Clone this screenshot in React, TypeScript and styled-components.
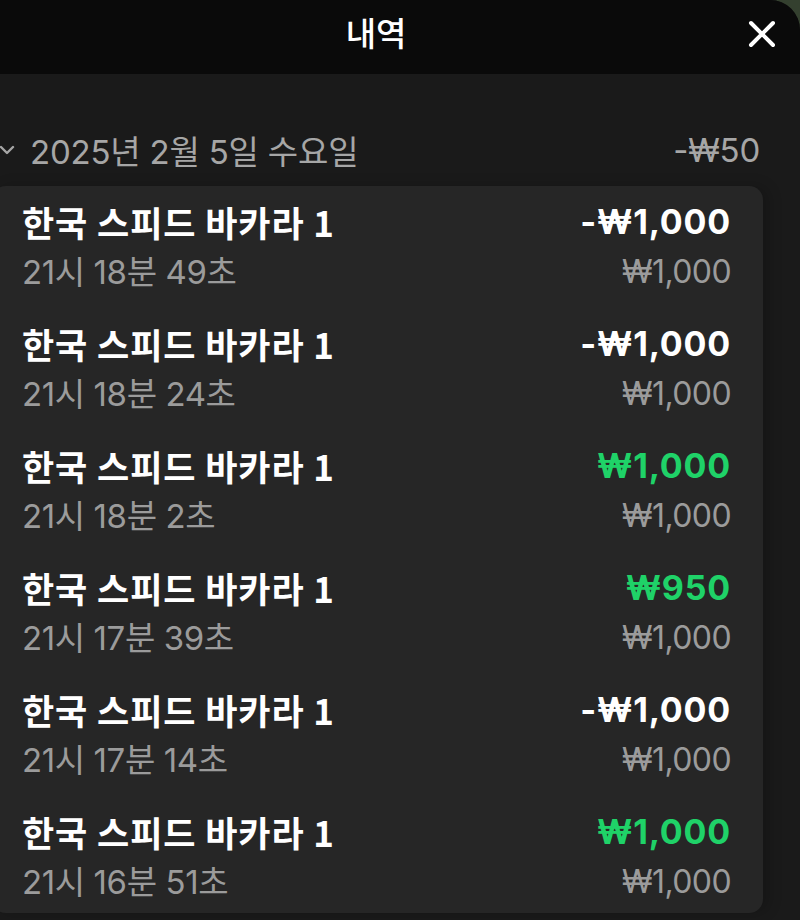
import React from 'react';
import styled, { createGlobalStyle } from 'styled-components';

const GlobalStyle = createGlobalStyle`
	html, body {
		margin: 0;
		padding: 0;
		background: #2f3a30;
	}
	body {
		font-family: Inter, "Noto Sans CJK KR", sans-serif;
	}
`;

const Screen = styled.div`
	width: 800px;
	height: 920px;
	overflow: hidden;
	background: #34402f;
`;

const Sheet = styled.div`
	height: 100%;
	background: #1a1a1a;
	border-top-right-radius: 30px;
	overflow: hidden;
	display: flex;
	flex-direction: column;
`;

const Header = styled.header`
	height: 74px;
	flex: none;
	background: #0a0a0a;
	display: flex;
	align-items: center;
	justify-content: center;
	position: relative;
`;

const Title = styled.h1`
	margin: 0;
	font-family: "Noto Sans CJK KR", sans-serif;
	font-size: 33px;
	font-weight: 500;
	color: #fff;
	line-height: 1;
	transform: translate(-24px, -5px);
`;

const CloseButton = styled.button`
	position: absolute;
	right: 22px;
	top: 18px;
	width: 32px;
	height: 32px;
	padding: 0;
	border: 0;
	background: none;
	display: flex;
	align-items: center;
	justify-content: center;
`;

const Body = styled.div`
	padding-top: 54px;
	display: flex;
	flex-direction: column;
	gap: 14px;
`;

const DateRow = styled.div`
	height: 44px;
	display: flex;
	align-items: center;
	padding-right: 40px;
	color: #a6a6a6;
	font-size: 33px;
	letter-spacing: -0.2px;
`;

const DateLabel = styled.div`
	display: flex;
	align-items: center;
	gap: 14px;
	flex: 1;
`;

const Card = styled.div`
	margin-left: -8px;
	width: 771px;
	background: #262626;
	border-radius: 14px;
	padding: 14px 32px 9px 30px;
	box-sizing: border-box;
	display: flex;
	flex-direction: column;
	gap: 28px;
	box-shadow: 6px 0 14px rgba(0, 0, 0, 0.18);
`;

const Row = styled.div`
	display: grid;
	grid-template-columns: 1fr auto;
	row-gap: 6px;
	align-items: center;
`;

const Game = styled.div`
	font-family: "Noto Sans CJK KR", sans-serif;
	font-size: 35px;
	font-weight: 700;
	color: #fff;
	line-height: 44px;
	letter-spacing: 0.9px;
`;

const Amount = styled.div<{ $win?: boolean }>`
	font-size: 34px;
	font-weight: 700;
	color: ${p => (p.$win ? '#1fd268' : '#ffffff')};
	line-height: 44px;
	text-align: right;
	letter-spacing: 0.8px;
`;

const Time = styled.div`
	font-size: 33px;
	color: #9b9b9b;
	line-height: 44px;
	letter-spacing: -0.4px;
`;

const Stake = styled.div`
	font-size: 32px;
	color: #9b9b9b;
	line-height: 44px;
	text-align: right;
	letter-spacing: -0.6px;
`;

const rows = [
	{ time: '21시 18분 49초', amount: '-₩1,000', win: false },
	{ time: '21시 18분 24초', amount: '-₩1,000', win: false },
	{ time: '21시 18분 2초', amount: '₩1,000', win: true },
	{ time: '21시 17분 39초', amount: '₩950', win: true },
	{ time: '21시 17분 14초', amount: '-₩1,000', win: false },
	{ time: '21시 16분 51초', amount: '₩1,000', win: true },
];

export default function App() {
	return (
		<Screen>
			<GlobalStyle />
			<Sheet>
				<Header>
					<Title>내역</Title>
					<CloseButton aria-label="닫기">
						<svg width="28" height="28" viewBox="0 0 28 28">
							<path d="M3 3 L25 25 M25 3 L3 25" stroke="#fff" strokeWidth="4" strokeLinecap="round" />
						</svg>
					</CloseButton>
				</Header>
				<Body>
					<DateRow>
						<DateLabel>
							<svg width="18" height="12" viewBox="0 0 18 12" style={{ marginLeft: '-2px' }}>
								<path d="M3 3 L9 9 L15 3" stroke="#a6a6a6" strokeWidth="2.4" fill="none" strokeLinecap="round" strokeLinejoin="round" />
							</svg>
							<span>2025년 2월 5일 수요일</span>
						</DateLabel>
						<span>-₩50</span>
					</DateRow>
					<Card>
						{rows.map((r, i) => (
							<Row key={i}>
								<Game>한국 스피드 바카라 1</Game>
								<Amount $win={r.win}>{r.amount}</Amount>
								<Time>{r.time}</Time>
								<Stake>₩1,000</Stake>
							</Row>
						))}
					</Card>
				</Body>
			</Sheet>
		</Screen>
	);
}
